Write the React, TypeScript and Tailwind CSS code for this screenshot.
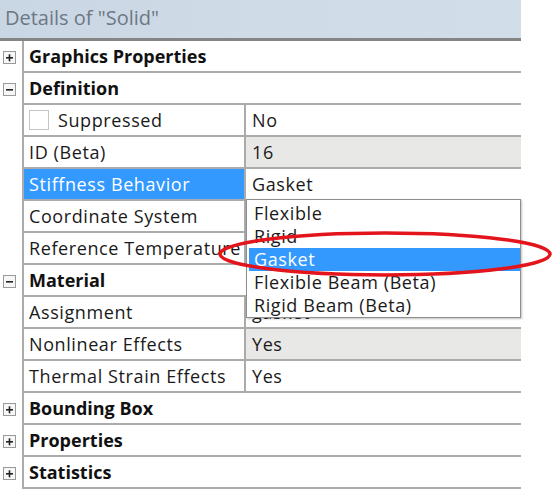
import React from "react";

const FONT = { fontFamily: '"Open Sans", "Noto Sans", "Liberation Sans", sans-serif' };

function Expander({ open }: { open: boolean }) {
  return (
    <div className="w-[13px] h-[13px] border border-[#9a9a9a] bg-[#f6f6f6] flex items-center justify-center">
      <svg width="9" height="9" viewBox="0 0 9 9">
        <rect x="1" y="4" width="7" height="1.6" fill="#222" />
        {!open && <rect x="3.7" y="1.3" width="1.6" height="7" fill="#222" />}
      </svg>
    </div>
  );
}

function Category({ label, open }: { label: string; open: boolean }) {
  return (
    <div className="flex h-[32px]">
      <div className="w-[22px] flex items-center pl-[3px] pt-[1px]">
        <Expander open={open} />
      </div>
      <div className="flex-1 border-l-2 border-b-2 border-[#ababab] flex items-center pl-[5px] font-bold text-[18px] text-[#111]">
        {label}
      </div>
    </div>
  );
}

function Prop({
  label,
  value,
  selected,
  grayValue,
  checkbox,
}: {
  label: string;
  value: string;
  selected?: boolean;
  grayValue?: boolean;
  checkbox?: boolean;
}) {
  return (
    <div className="flex h-[32px]">
      <div className="w-[22px]" />
      <div className="flex-1 flex border-l-2 border-b-2 border-[#ababab]">
        <div
          className={
            "w-[222px] shrink-0 border-r-2 border-[#ababab] flex items-center pl-[5px] text-[18px] tracking-[0.6px] whitespace-nowrap overflow-hidden " +
            (selected ? "bg-[#3399ff] text-white" : "text-[#1a1a1a]")
          }
        >
          {checkbox && (
            <div className="w-[20px] h-[20px] border border-[#c4c4c4] bg-white mr-[9px] shrink-0" />
          )}
          {label}
        </div>
        <div
          className={
            "flex-1 flex items-center pl-[6px] text-[18px] tracking-[0.6px] text-[#1a1a1a] " +
            (grayValue ? "bg-[#e8e8e6]" : "bg-white")
          }
        >
          {value}
        </div>
      </div>
    </div>
  );
}

const items = ["Flexible", "Rigid", "Gasket", "Flexible Beam (Beta)", "Rigid Beam (Beta)"];

export default function App() {
  return (
    <div className="w-[555px] h-[491px] bg-white relative overflow-hidden" style={FONT}>
      <div className="w-[521px]">
        <div className="h-[41px] bg-gradient-to-r from-[#c9d6e3] via-[#cfdbe7] to-[#d1dde8] border-b-[3px] border-[#858585] flex items-center pl-[5px] pb-[2px] text-[20px] text-[#6c7884]">
          Details of "Solid"
        </div>
        <Category label="Graphics Properties" open={false} />
        <Category label="Definition" open={true} />
        <Prop label="Suppressed" value="No" checkbox />
        <Prop label="ID (Beta)" value="16" grayValue />
        <Prop label="Stiffness Behavior" value="Gasket" selected />
        <Prop label="Coordinate System" value="" />
        <Prop label="Reference Temperature" value="" />
        <Category label="Material" open={true} />
        <Prop label="Assignment" value="gasket" />
        <Prop label="Nonlinear Effects" value="Yes" grayValue />
        <Prop label="Thermal Strain Effects" value="Yes" />
        <Category label="Bounding Box" open={false} />
        <Category label="Properties" open={false} />
        <Category label="Statistics" open={false} />
      </div>

      <div className="absolute left-[246px] top-[199px] w-[275px] h-[119px] bg-white border border-[#8e8e8e] pt-[2px] pl-[2px] shadow-[1px_1px_2px_rgba(0,0,0,0.25)]">
        {items.map((it) => (
          <div
            key={it}
            className={
              "h-[23px] flex items-center pl-[5px] text-[18px] tracking-[0.6px] leading-[23px] whitespace-nowrap " +
              (it === "Gasket" ? "bg-[#3399ff] text-white" : "text-[#1a1a1a]")
            }
          >
            {it}
          </div>
        ))}
      </div>

      <svg className="absolute left-0 top-0 pointer-events-none" width="555" height="491">
        <ellipse cx="385" cy="254" rx="165" ry="21" fill="none" stroke="#e3141c" strokeWidth="3.5" />
      </svg>
    </div>
  );
}
